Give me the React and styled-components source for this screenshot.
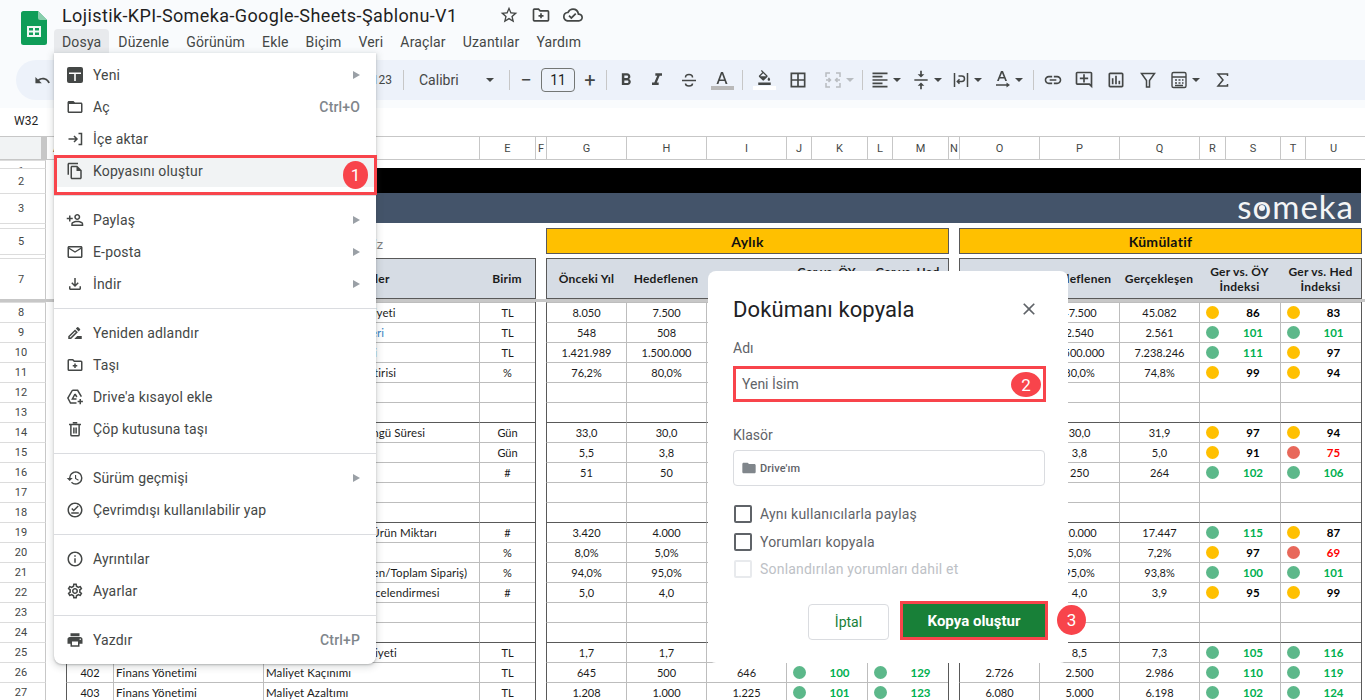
import React from "react";
import styled, { createGlobalStyle, css } from "styled-components";
import {
  MdUndo, MdFormatBold, MdFormatItalic, MdFormatColorFill, MdBorderAll, MdFormatAlignLeft,
  MdVerticalAlignCenter, MdLink, MdOutlineAddComment, MdOutlineInsertChart, MdStarBorder,
  MdOutlineCloudDone, MdFolderOpen, MdOutlineFileCopy, MdOutlinePersonAddAlt,
  MdOutlineEmail, MdOutlineFileDownload, MdOutlineDriveFileRenameOutline,
  MdHistory, MdOutlineOfflinePin, MdOutlineInfo, MdOutlineSettings, MdPrint,
  MdClose, MdFolder,
} from "react-icons/md";

const GlobalStyle = createGlobalStyle`
  html, body { margin: 0; padding: 0; overflow: hidden; background: #fff; }
  * { box-sizing: border-box; }
`;

const UI_FONT = `Roboto, "Liberation Sans", sans-serif`;
const CELL_FONT = `Lato, "Liberation Sans", sans-serif`;
const LINE = "#bdbdbd";
const DARK = "#595959";
const RED = "#f8444b";
const COLS = "46px 20px 47px 150px 216px 56px 11px 80px 80px 80px 25px 56px 25px 56px 11px 80px 80px 80px 26px 55px 25px 56px 1fr";

const Page = styled.div`
  position: relative;
  width: 1365px;
  height: 700px;
  overflow: hidden;
  background: #fff;
  font-family: ${UI_FONT};
`;

/* top chrome */
const Chrome = styled.header`
  display: flex;
  height: 60px;
  background: #f9fbfd;
`;
const LogoSlot = styled.div`
  width: 62px;
  padding: 11px 0 0 21px;
`;
const TitleArea = styled.div`
  display: flex;
  flex-direction: column;
`;
const TitleRow = styled.div`
  display: flex;
  align-items: center;
  height: 29px;
  padding-top: 1px;
`;
const DocTitle = styled.div`
  width: 431px;
  font-size: 18px;
  letter-spacing: 0.39px;
  color: #1f1f1f;
`;
const TitleIcon = styled.span`
  display: flex;
  justify-content: center;
  width: 32px;
  font-size: 20px;
  color: #444746;
`;
const MenuBar = styled.nav`
  display: flex;
  margin-left: -8px;
  gap: 1px;
`;
const MenuLabel = styled.div`
  height: 24px;
  line-height: 26px;
  padding: 0 8px;
  font-size: 14px;
  letter-spacing: 0.16px;
  color: #444746;
  background: ${(p) => (p.$open ? "#e8eaed" : "transparent")};
  border-radius: 4px 4px 0 0;
`;

const ToolStrip = styled.div`
  background: #f9fbfd;
  height: 48px;
  padding: 0 0 8px 16px;
`;
const Toolbar = styled.div`
  display: flex;
  align-items: center;
  height: 40px;
  padding-left: 14px;
  background: #edf2fa;
  border-radius: 20px 0 0 20px;
  color: #444746;
`;
const ToolSlot = styled.div`
  display: flex;
  flex: none;
  align-items: center;
  justify-content: ${(p) => (p.$pad !== undefined ? "flex-start" : "center")};
  gap: 3px;
  width: ${(p) => p.$w}px;
  padding-left: ${(p) => p.$pad || 0}px;
  height: 24px;
  font-size: ${(p) => p.$size || 20}px;
  color: ${(p) => (p.$off ? "#b8bcc0" : "#444746")};
`;
const Sep = styled.i`
  display: block;
  width: 1px;
  height: 20px;
  background: #c7c7c7;
`;
const Caret = styled.i`
  display: block;
  flex: none;
  width: 0;
  height: 0;
  border-left: 4px solid transparent;
  border-right: 4px solid transparent;
  border-top: 4px solid ${(p) => (p.$off ? "#b8bcc0" : "#444746")};
`;
const NumberFormats = styled.div`
  display: flex;
  flex: none;
  justify-content: flex-end;
  align-items: center;
  width: 338px;
  font-size: 12px;
  color: #444746;
`;
const FontPicker = styled.div`
  display: flex;
  flex: none;
  align-items: center;
  justify-content: space-between;
  width: 88px;
  padding: 0 8px 0 5px;
  font-size: 14px;
`;
const SizeBox = styled.div`
  width: 34px;
  height: 24px;
  line-height: 22px;
  text-align: center;
  font-size: 14px;
  color: #1f1f1f;
  border: 1px solid #747775;
  border-radius: 4px;
`;
const ColorStack = styled.div`
  display: flex;
  flex-direction: column;
  align-items: center;
  gap: 1px;
  font-size: 15px;
  line-height: 0;
`;
const ColorBar = styled.i`
  display: block;
  width: 23px;
  height: 4px;
  background: ${(p) => p.$color};
`;

const FormulaBar = styled.div`
  height: 28px;
  line-height: 26px;
  padding-left: 14px;
  font-size: 12px;
  color: #1f1f1f;
  background: #fff;
`;

/* sheet */
const SheetRow = styled.div`
  display: grid;
  grid-template-columns: ${COLS};
  grid-template-rows: ${(p) => p.$h}px;
  height: ${(p) => p.$h}px;
  overflow: hidden;
  font-family: ${CELL_FONT};
  font-size: 11px;
  color: #1b1b1b;
`;
const ColLetters = styled(SheetRow)`
  grid-template-rows: 22px;
  font-family: ${UI_FONT};
  color: #444746;
  border-top: 1px solid #c7c7c7;
  border-bottom: 1px solid #c7c7c7;
`;
const Corner = styled.div`
  background: linear-gradient(90deg, #f1f3f4 41px, #c7c7c7 41px);
`;
const Letter = styled.div`
  display: flex;
  align-items: center;
  justify-content: center;
  border-left: 1px solid #c7c7c7;
`;
const RowNum = styled.div`
  display: flex;
  justify-content: center;
  align-items: ${(p) => (p.$top ? "flex-start" : "center")};
  padding: ${(p) => p.$top || 0}px 3px 0 0;
  font-family: ${UI_FONT};
  color: #444746;
  border-top: 1px solid #dcdcdc;
  border-right: 1px solid #c7c7c7;
`;
const Blank = styled.div``;
const Band = styled.div`
  grid-column: 3 / span 20;
  display: flex;
  align-items: center;
  justify-content: flex-end;
  background: ${(p) => p.$color};
`;
const Brand = styled.div`
  padding: 0 7px 4px 0;
  font-family: Lato, sans-serif;
  font-size: 33px;
  line-height: 30px;
  letter-spacing: 1px;
  color: #f4f5f6;
`;
const BrandO = styled.span`
  position: relative;
  &::after {
    content: "";
    position: absolute;
    left: 50%;
    top: 55%;
    width: 6px;
    height: 6px;
    margin: -3px 0 0 -3.5px;
    border-radius: 50%;
    background: #f4f5f6;
  }
`;
const SectionNote = styled.div`
  grid-column: 5 / span 2;
  display: flex;
  align-items: center;
  padding: 4px 0 0 11px;
  font-size: 14px;
  color: #7f7f7f;
`;
const SectionTitle = styled.div`
  grid-column: ${(p) => p.$col} / span 7;
  display: flex;
  align-items: center;
  justify-content: center;
  margin-right: -1px;
  background: #ffc000;
  border: 1px solid ${DARK};
  font-size: 14px;
  letter-spacing: 0.3px;
  font-weight: 700;
  color: #111;
`;
const HeadCell = styled.div`
  grid-column: span ${(p) => p.$span || 1};
  display: flex;
  align-items: center;
  justify-content: center;
  text-align: center;
  line-height: 15px;
  font-size: 12px;
  letter-spacing: 0.25px;
  font-weight: 700;
  color: #1b1b1b;
  background: #d6dce4;
  border-top: 1px solid ${DARK};
  border-bottom: 1px solid ${DARK};
  ${(p) => p.$edge && css`border-left: 1px solid ${DARK};`}
`;
const FreezeBar = styled.div`
  height: 3px;
  background: #c7c7c7;
`;
const Gap = styled.div`
  border-left: 1px solid ${DARK};
`;
const Cell = styled.div`
  display: flex;
  align-items: center;
  justify-content: ${(p) => (p.$left ? "flex-start" : "center")};
  white-space: nowrap;
  overflow: hidden;
  color: ${(p) => p.$color || "inherit"};
  border-top: 1px solid ${(p) => (p.$strong ? DARK : LINE)};
  border-left: 1px solid ${(p) => (p.$edge ? DARK : LINE)};
  ${(p) => p.$left && css`
    padding-left: 2px;
    font-size: 11.5px;
    letter-spacing: 0.1px;
  `}
`;
const ScoreCell = styled(Cell)`
  grid-column: span 2;
  display: grid;
  grid-template-columns: ${(p) => (p.$wide ? "26px 55px" : "25px 56px")};
  justify-items: center;
  font-size: 11.5px;
  font-weight: 700;
`;
const Dot = styled.i`
  display: block;
  width: 13px;
  height: 13px;
  border-radius: 50%;
  background: ${(p) => p.$color};
`;

/* file menu */
const FileMenu = styled.div`
  position: absolute;
  left: 54px;
  top: 53px;
  width: 322px;
  padding: 6px 0 8px;
  background: #fff;
  border-radius: 0 0 8px 8px;
  box-shadow: 0 2px 6px 2px rgba(60, 64, 67, 0.15), 0 1px 2px rgba(60, 64, 67, 0.3);
`;
const MenuItem = styled.div`
  position: relative;
  display: flex;
  align-items: center;
  height: 32px;
  padding-left: 12px;
  font-size: 14px;
  letter-spacing: 0.15px;
  color: #444746;
  background: ${(p) => (p.$hot ? "#f1f3f4" : "transparent")};
`;
const ItemIcon = styled.span`
  display: flex;
  justify-content: center;
  width: 18px;
  margin-right: 9px;
  font-size: 18px;
  color: #444746;
`;
const Shortcut = styled.span`
  margin-left: auto;
  padding-right: 16px;
  font-size: 14px;
  font-weight: 500;
  color: #80868b;
`;
const SubArrow = styled.i`
  margin-left: auto;
  margin-right: 16px;
  width: 0;
  height: 0;
  border-top: 4px solid transparent;
  border-bottom: 4px solid transparent;
  border-left: 7px solid #9aa0a6;
`;
const MenuRule = styled.div`
  height: 1px;
  margin: 8px 0;
  background: #dadce0;
`;
const ItemFrame = styled.div`
  position: absolute;
  left: 0;
  right: -1px;
  top: 0;
  bottom: -8px;
  border: 3px solid ${RED};
`;
const Badge = styled.div`
  position: absolute;
  display: flex;
  align-items: center;
  justify-content: center;
  font-family: ${UI_FONT};
  font-size: 17px;
  color: #fff;
  background: ${RED};
  border-radius: 50%;
  left: ${(p) => p.$x}px;
  top: ${(p) => p.$y}px;
  width: ${(p) => p.$w}px;
  height: ${(p) => p.$h}px;
`;

/* copy dialog */
const Dialog = styled.div`
  position: absolute;
  left: 708px;
  top: 271px;
  width: 360px;
  height: 392px;
  padding: 23px 22px 0 25px;
  background: #fff;
  border-radius: 8px;
`;
const DialogHead = styled.div`
  display: flex;
  align-items: center;
  justify-content: space-between;
  height: 30px;
  padding-right: 7px;
`;
const DialogTitle = styled.div`
  font-size: 22px;
  letter-spacing: 0.1px;
  color: #202124;
`;
const CloseIcon = styled.span`
  display: flex;
  font-size: 20px;
  color: #5f6368;
`;
const FieldLabel = styled.div`
  margin-top: ${(p) => p.$mt}px;
  height: 20px;
  line-height: 20px;
  font-size: 14px;
  color: #5f6368;
`;
const NameInput = styled.div`
  position: relative;
  display: flex;
  align-items: center;
  height: 36px;
  margin-top: 8px;
  padding-left: 6px;
  font-size: 14px;
  color: #5f6368;
  border: 3px solid ${RED};
`;
const FolderField = styled.div`
  display: flex;
  align-items: center;
  gap: 3px;
  width: 312px;
  height: 36px;
  margin-top: 5px;
  padding-left: 7px;
  font-size: 11px;
  font-weight: 500;
  letter-spacing: 0.1px;
  color: #5f6368;
  border: 1px solid #dadce0;
  border-radius: 4px;
`;
const FolderGlyph = styled.span`
  display: flex;
  font-size: 16px;
  color: #80868b;
`;
const CheckRow = styled.div`
  display: flex;
  align-items: center;
  gap: 8px;
  height: 18px;
  margin: ${(p) => p.$mt}px 0 0 1px;
  font-size: 14px;
  letter-spacing: 0.2px;
  color: ${(p) => (p.$off ? "#bdc1c6" : "#5f6368")};
`;
const CheckBox = styled.i`
  display: block;
  width: 18px;
  height: 18px;
  border: 2px solid ${(p) => (p.$off ? "#e8eaed" : "#5f6368")};
  border-radius: 2px;
`;
const DialogFoot = styled.div`
  display: flex;
  justify-content: flex-end;
  align-items: flex-end;
  gap: 11px;
  margin-top: 23px;
  margin-right: -2px;
`;
const GhostButton = styled.div`
  display: flex;
  align-items: center;
  justify-content: center;
  width: 81px;
  height: 36px;
  font-size: 14px;
  color: #188038;
  border: 1px solid #dadce0;
  border-radius: 4px;
`;
const CopyFrame = styled.div`
  width: 148px;
  height: 39px;
  border: 3px solid ${RED};
`;
const CopyButton = styled.div`
  display: flex;
  align-items: center;
  justify-content: center;
  height: 100%;
  font-size: 15px;
  font-weight: 700;
  color: #fff;
  background: #188038;
`;

const TONE = { g: "#5cb88a", a: "#ffc000", r: "#e8685a" };
const scoreColor = (tone) => (tone === "g" ? "#00b050" : tone === "r" ? "#ff0000" : "#000");

const Score = ({ tone, value, strong, wide }) => (
  <ScoreCell $strong={strong} $wide={wide}>
    {tone && <Dot $color={TONE[tone]} />}
    {tone && <span style={{ color: scoreColor(tone) }}>{value}</span>}
  </ScoreCell>
);

const rows = [
  { n: 8, b: "101", c: "Finans Yönetimi", d: "Toplam Lojistiğin Maliyeti", e: "TL", m: ["8.050", "7.500", "6.450"], s: ["a", 86, "a", 83], k: ["47.500", "45.082"], o: "52.420", t: ["a", 86, "a", 83] },
  { n: 9, b: "102", c: "Finans Yönetimi", d: "Birim Başı Yakım Gideri", dc: "#3d85c6", e: "TL", m: ["548", "508", "512"], s: ["g", 101, "g", 101], k: ["2.540", "2.561"], o: "2.540", t: ["g", 101, "g", 101] },
  { n: 10, b: "103", c: "Finans Yönetimi", d: "Yeni Depolama Gideri", e: "TL", m: ["1.421.989", "1.500.000", "1.458.000"], s: ["g", 103, "a", 97], k: ["7.500.000", "7.238.246"], o: "6.520.000", t: ["g", 111, "a", 97] },
  { n: 11, b: "104", c: "Finans Yönetimi", d: "Lojistik Maliyetler Getirisi", e: "%", m: ["76,2%", "80,0%", "75,4%"], s: ["a", 99, "a", 94], k: ["80,0%", "74,8%"], o: "75,5%", t: ["a", 99, "a", 94] },
  { n: 12 }, { n: 13 },
  { n: 14, strong: true, b: "201", c: "Sipariş Yönetimi", d: "Siparişin Teslimat Döngü Süresi", e: "Gün", m: ["33,0", "30,0", "32,0"], s: ["a", 97, "a", 94], k: ["30,0", "31,9"], o: "33,0", t: ["a", 97, "a", 94] },
  { n: 15, b: "202", c: "Sipariş Yönetimi", d: "Teslimat Süresi", e: "Gün", m: ["5,5", "3,8", "5,0"], s: ["a", 91, "r", 75], k: ["3,8", "5,0"], o: "5,5", t: ["a", 91, "r", 75] },
  { n: 16, b: "203", c: "Sipariş Yönetimi", d: "Sipariş Sayısı", e: "#", m: ["51", "50", "52"], s: ["g", 102, "g", 106], k: ["250", "264"], o: "259", t: ["g", 102, "g", 106] },
  { n: 17 }, { n: 18 },
  { n: 19, strong: true, b: "301", c: "Depo Yönetimi", d: "Depoda Sevk Edilen Ürün Miktarı", e: "#", m: ["3.420", "4.000", "3.930"], s: ["g", 115, "a", 87], k: ["20.000", "17.447"], o: "15.170", t: ["g", 115, "a", 87] },
  { n: 20, b: "302", c: "Depo Yönetimi", d: "Hasarlı Ürün Oranı", e: "%", m: ["8,0%", "5,0%", "7,8%"], s: ["a", 97, "r", 69], k: ["5,0%", "7,2%"], o: "7,0%", t: ["a", 97, "r", 69] },
  { n: 21, b: "303", c: "Depo Yönetimi", d: "Doluluğu (Teslim Edilen/Toplam Sipariş)", e: "%", m: ["94,0%", "95,0%", "94,0%"], s: ["g", 100, "g", 101], k: ["95,0%", "93,8%"], o: "94,0%", t: ["g", 100, "g", 101] },
  { n: 22, b: "304", c: "Depo Yönetimi", d: "Ortalama Kargo Derecelendirmesi", e: "#", m: ["5,0", "4,0", "4,7"], s: ["a", 95, "a", 99], k: ["4,0", "3,9"], o: "4,1", t: ["a", 95, "a", 99] },
  { n: 23 }, { n: 24 },
  { n: 25, strong: true, b: "401", c: "Finans Yönetimi", d: "Kilometre Başına Maliyeti", e: "TL", m: ["1,7", "1,7", "1,8"], s: ["g", 105, "g", 116], k: ["8,5", "7,3"], o: "7,0", t: ["g", 105, "g", 116] },
  { n: 26, b: "402", c: "Finans Yönetimi", d: "Maliyet Kaçınımı", e: "TL", m: ["645", "500", "646"], s: ["g", 100, "g", 129], k: ["2.500", "2.986"], o: "2.726", t: ["g", 110, "g", 119] },
  { n: 27, b: "403", c: "Finans Yönetimi", d: "Maliyet Azaltımı", e: "TL", m: ["1.208", "1.000", "1.225"], s: ["g", 101, "g", 123], k: ["5.000", "6.198"], o: "6.080", t: ["g", 102, "g", 124] },
];

const DataRow = ({ r }) => {
  const st = r.strong;
  const qm = r.m || ["", "", ""];
  const qs = r.s || [];
  const qt = r.t || [];
  const qk = r.k || ["", ""];
  return (
    <SheetRow $h={20}>
      <RowNum>{r.n}</RowNum>
      <Blank />
      <Cell $edge $strong={st}>{r.b}</Cell>
      <Cell $left $strong={st}>{r.c}</Cell>
      <Cell $left $strong={st} $color={r.dc}>{r.d}</Cell>
      <Cell $strong={st}>{r.e}</Cell>
      <Gap />
      <Cell $edge $strong={st}>{qm[0]}</Cell>
      <Cell $strong={st}>{qm[1]}</Cell>
      <Cell $strong={st}>{qm[2]}</Cell>
      <Score tone={qs[0]} value={qs[1]} strong={st} />
      <Score tone={qs[2]} value={qs[3]} strong={st} />
      <Gap />
      <Cell $edge $strong={st}>{r.o}</Cell>
      <Cell $strong={st}>{qk[0]}</Cell>
      <Cell $strong={st}>{qk[1]}</Cell>
      <Score tone={qt[0]} value={qt[1]} strong={st} wide />
      <Score tone={qt[2]} value={qt[3]} strong={st} />
      <Gap />
    </SheetRow>
  );
};

const SheetsLogo = () => (
  <svg width="26" height="34" viewBox="0 0 26 34">
    <path d="M2.5 0H17l9 9v22.5a2.5 2.5 0 0 1-2.5 2.5h-21A2.5 2.5 0 0 1 0 31.500v-29A2.500 2.500 0 0 1 2.500 0z" fill="#0f9d58" />
    <path d="M17 0l9 9h-7a2 2 0 0 1-2-2z" fill="#87ceac" />
    <path d="M6 15h14v11H6zm2 2v2.500h4V17zm6 0v2.500h4V17zm-6 4.500V24h4v-2.500zm6 0V24h4v-2.500z" fill="#f1f8f4" fillRule="evenodd" />
  </svg>
);

const StrikeIcon = () => (
  <svg width="18" height="18" viewBox="0 0 18 18" fill="none" stroke="currentColor" strokeWidth="1.500">
    <path d="M2 9.500h14" />
    <path d="M12.500 6.500C12.500 4.800 11 3.500 9 3.500S5.500 4.800 5.500 6.500M5.500 12.500c0 1.500 1.500 2.500 3.500 2.500s3.500-1 3.500-2.500" />
  </svg>
);
const LetterA = () => (
  <svg width="14" height="14" viewBox="0 0 14 14" fill="currentColor">
    <path d="M6 1h2l4.500 12h-1.900l-1-2.900H4.400l-1 2.900H1.500zm-1 7.500h4L7 3z" />
  </svg>
);
const MergeIcon = () => (
  <svg width="20" height="20" viewBox="0 0 20 20" fill="none" stroke="currentColor" strokeWidth="1.500">
    <path d="M3 7V3h4M13 3h4v4M3 13v4h4M13 17h4v-4" />
    <path d="M3 10h4M5.500 8 7.500 10l-2 2M17 10h-4M14.500 8l-2 2 2 2" />
  </svg>
);
const WrapIcon = () => (
  <svg width="20" height="20" viewBox="0 0 20 20" fill="none" stroke="currentColor" strokeWidth="1.500">
    <path d="M3.500 3v14M16.500 3v14" />
    <path d="M7.500 4h3.300a2.700 2.700 0 0 1 0 5.400H6.500M8.500 7.200 6.300 9.400l2.200 2.200" transform="translate(0 2)" />
  </svg>
);
const RotateIcon = () => (
  <svg width="20" height="20" viewBox="0 0 20 20" fill="currentColor">
    <path d="M9 1h2l4 10h-1.800l-.9-2.400H7.700L6.800 11H5zm-.7 6h3.400L10 3z" />
    <path d="M4 14.300h10.500v-1.800L18 15l-3.500 2.500v-1.800H4z" />
  </svg>
);
const FunnelIcon = () => (
  <svg width="20" height="20" viewBox="0 0 20 20" fill="none" stroke="currentColor" strokeWidth="1.500">
    <path d="M3.500 3.500h13L11.500 10.500V17h-3v-6.500z" />
  </svg>
);
const CalcIcon = () => (
  <svg width="20" height="20" viewBox="0 0 20 20" fill="none" stroke="currentColor" strokeWidth="1.400">
    <rect x="3" y="2.500" width="14" height="15" rx="1.500" />
    <path d="M3 7h14M6 10h2M9.500 10h2M13 10h1.500M6 13h2M9.500 13h2M13 13h1.500M6 15.500h8" />
  </svg>
);
const SigmaIcon = () => (
  <svg width="18" height="18" viewBox="0 0 18 18" fill="none" stroke="currentColor" strokeWidth="1.500">
    <path d="M13.500 5V3h-9.500L9 9l-5 6h9.500v-2" />
  </svg>
);
const NewSheetIcon = () => (
  <svg width="18" height="18" viewBox="0 0 18 18">
    <rect x="1" y="1" width="16" height="16" rx="2" fill="#444746" />
    <path d="M3 6.500h12v1.500H9.800v7H8.200V8H3z" fill="#fff" />
  </svg>
);
const ImportIcon = () => (
  <svg width="18" height="18" viewBox="0 0 18 18" fill="none" stroke="#444746" strokeWidth="1.500">
    <path d="M2.500 9h8M8 6l3 3-3 3M12.500 3.500h3v11h-3" />
  </svg>
);
const FolderPlusIcon = ({ size = 18 }) => (
  <svg width={size} height={size} viewBox="0 0 24 24" fill="none" stroke="currentColor" strokeWidth="2">
    <path d="M3 6a1 1 0 0 1 1-1h5l2 2h9a1 1 0 0 1 1 1v10a1 1 0 0 1-1 1H4a1 1 0 0 1-1-1z" />
    <path d="M12 10v6M9 13h6" />
  </svg>
);
const DriveShortcutIcon = () => (
  <svg width="18" height="18" viewBox="0 0 24 24" fill="none" stroke="#444746" strokeWidth="2">
    <path d="M8.500 3h7l5 8.500M8.500 3 2.500 13.500 6 20h8" />
    <path d="M12 8l-3.500 6.500h5.500M12 8l2.500 4" />
    <path d="M19 14.500v7M15.500 18h7" />
  </svg>
);
const TrashIcon = () => (
  <svg width="18" height="18" viewBox="0 0 24 24" fill="none" stroke="#444746" strokeWidth="2">
    <path d="M6.500 7v12.500a1.500 1.500 0 0 0 1.500 1.500h8a1.500 1.500 0 0 0 1.500-1.500V7M4 6h16M9 3.500h6M10.500 10v8M13.500 10v8" />
  </svg>
);

const Item = ({ icon, label, shortcut, sub, hot, children }) => (
  <MenuItem $hot={hot}>
    <ItemIcon>{icon}</ItemIcon>
    {label}
    {shortcut && <Shortcut>{shortcut}</Shortcut>}
    {sub && <SubArrow />}
    {children}
  </MenuItem>
);

const menuLabels = ["Düzenle", "Görünüm", "Ekle", "Biçim", "Veri", "Araçlar", "Uzantılar", "Yardım"];
const letters = "A B C D E F G H I J K L M N O P Q R S T U".split(" ");

export default function App() {
  return (
    <Page>
      <GlobalStyle />
      <Chrome>
        <LogoSlot><SheetsLogo /></LogoSlot>
        <TitleArea>
          <TitleRow>
            <DocTitle>Lojistik-KPI-Someka-Google-Sheets-Şablonu-V1</DocTitle>
            <TitleIcon><MdStarBorder /></TitleIcon>
            <TitleIcon><FolderPlusIcon size={20} /></TitleIcon>
            <TitleIcon><MdOutlineCloudDone /></TitleIcon>
          </TitleRow>
          <MenuBar>
            <MenuLabel $open>Dosya</MenuLabel>
            {menuLabels.map((m) => <MenuLabel key={m}>{m}</MenuLabel>)}
          </MenuBar>
        </TitleArea>
      </Chrome>

      <ToolStrip>
        <Toolbar>
          <ToolSlot $w={24} $size={17}><MdUndo /></ToolSlot>
          <NumberFormats>123</NumberFormats>
          <ToolSlot $w={22}><Sep /></ToolSlot>
          <FontPicker>Calibri<Caret /></FontPicker>
          <ToolSlot $w={15}><Sep /></ToolSlot>
          <ToolSlot $w={18}>−</ToolSlot>
          <ToolSlot $w={46}><SizeBox>11</SizeBox></ToolSlot>
          <ToolSlot $w={18}>+</ToolSlot>
          <ToolSlot $w={14}><Sep /></ToolSlot>
          <ToolSlot $w={26}><MdFormatBold /></ToolSlot>
          <ToolSlot $w={36}><MdFormatItalic /></ToolSlot>
          <ToolSlot $w={28}><StrikeIcon /></ToolSlot>
          <ToolSlot $w={38}><ColorStack><LetterA /><ColorBar $color="#b9b9b9" /></ColorStack></ToolSlot>
          <ToolSlot $w={2}><Sep /></ToolSlot>
          <ToolSlot $w={42}><ColorStack><MdFormatColorFill /><ColorBar $color="#fff" /></ColorStack></ToolSlot>
          <ToolSlot $w={25}><MdBorderAll /></ToolSlot>
          <ToolSlot $w={46} $pad={13} $off><MergeIcon /><Caret $off /></ToolSlot>
          <ToolSlot $w={12}><Sep /></ToolSlot>
          <ToolSlot $w={35} $pad={2}><MdFormatAlignLeft /><Caret /></ToolSlot>
          <ToolSlot $w={41} $pad={8}><MdVerticalAlignCenter /><Caret /></ToolSlot>
          <ToolSlot $w={41} $pad={7}><WrapIcon /><Caret /></ToolSlot>
          <ToolSlot $w={41} $pad={7}><RotateIcon /><Caret /></ToolSlot>
          <ToolSlot $w={14}><Sep /></ToolSlot>
          <ToolSlot $w={26}><MdLink /></ToolSlot>
          <ToolSlot $w={36}><MdOutlineAddComment /></ToolSlot>
          <ToolSlot $w={28}><MdOutlineInsertChart /></ToolSlot>
          <ToolSlot $w={36}><FunnelIcon /></ToolSlot>
          <ToolSlot $w={38} $pad={3}><CalcIcon /><Caret /></ToolSlot>
          <ToolSlot $w={38}><SigmaIcon /></ToolSlot>
        </Toolbar>
      </ToolStrip>

      <FormulaBar>W32</FormulaBar>

      <ColLetters $h={24}>
        <Corner />
        {letters.map((l) => <Letter key={l}>{l}</Letter>)}
      </ColLetters>

      <SheetRow $h={8}><RowNum $top={4}>1</RowNum></SheetRow>
      <SheetRow $h={25}><RowNum>2</RowNum><Blank /><Band $color="#000" /></SheetRow>
      <SheetRow $h={30}>
        <RowNum>3</RowNum><Blank />
        <Band $color="#44546a"><Brand>s<BrandO>o</BrandO>meka</Brand></Band>
      </SheetRow>
      <SheetRow $h={5}><RowNum /></SheetRow>
      <SheetRow $h={26}>
        <RowNum>5</RowNum><Blank />
        <SectionNote>Detaylı KPI Analiz</SectionNote>
        <SectionTitle $col={8}>Aylık</SectionTitle>
        <SectionTitle $col={16}>Kümülatif</SectionTitle>
      </SheetRow>
      <SheetRow $h={4}><RowNum /></SheetRow>
      <SheetRow $h={41}>
        <RowNum>7</RowNum><Blank />
        <HeadCell $edge>Kod</HeadCell>
        <HeadCell>Kategori</HeadCell>
        <HeadCell>KPI'ler</HeadCell>
        <HeadCell>Birim</HeadCell>
        <Gap />
        <HeadCell $edge>Önceki Yıl</HeadCell>
        <HeadCell>Hedeflenen</HeadCell>
        <HeadCell>Gerçekleşen</HeadCell>
        <HeadCell $span={2}>Ger vs. ÖY<br />İndeksi</HeadCell>
        <HeadCell $span={2}>Ger vs. Hed<br />İndeksi</HeadCell>
        <Gap />
        <HeadCell $edge>Önceki Yıl</HeadCell>
        <HeadCell>Hedeflenen</HeadCell>
        <HeadCell>Gerçekleşen</HeadCell>
        <HeadCell $span={2}>Ger vs. ÖY<br />İndeksi</HeadCell>
        <HeadCell $span={2}>Ger vs. Hed<br />İndeksi</HeadCell>
        <Gap />
      </SheetRow>
      <FreezeBar />
      {rows.map((r) => <DataRow key={r.n} r={r} />)}

      <FileMenu>
        <Item icon={<NewSheetIcon />} label="Yeni" sub />
        <Item icon={<MdFolderOpen />} label="Aç" shortcut="Ctrl+O" />
        <Item icon={<ImportIcon />} label="İçe aktar" />
        <Item icon={<MdOutlineFileCopy />} label="Kopyasını oluştur" hot>
          <ItemFrame />
          <Badge $x={289} $y={6} $w={25} $h={28}>1</Badge>
        </Item>
        <MenuRule />
        <Item icon={<MdOutlinePersonAddAlt style={{ transform: "scaleX(-1)" }} />} label="Paylaş" sub />
        <Item icon={<MdOutlineEmail />} label="E-posta" sub />
        <Item icon={<MdOutlineFileDownload />} label="İndir" sub />
        <MenuRule />
        <Item icon={<MdOutlineDriveFileRenameOutline />} label="Yeniden adlandır" />
        <Item icon={<FolderPlusIcon />} label="Taşı" />
        <Item icon={<DriveShortcutIcon />} label="Drive'a kısayol ekle" />
        <Item icon={<TrashIcon />} label="Çöp kutusuna taşı" />
        <MenuRule />
        <Item icon={<MdHistory />} label="Sürüm geçmişi" sub />
        <Item icon={<MdOutlineOfflinePin />} label="Çevrimdışı kullanılabilir yap" />
        <MenuRule />
        <Item icon={<MdOutlineInfo />} label="Ayrıntılar" />
        <Item icon={<MdOutlineSettings />} label="Ayarlar" />
        <MenuRule />
        <Item icon={<MdPrint />} label="Yazdır" shortcut="Ctrl+P" />
      </FileMenu>

      <Dialog>
        <DialogHead>
          <DialogTitle>Dokümanı kopyala</DialogTitle>
          <CloseIcon><MdClose /></CloseIcon>
        </DialogHead>
        <FieldLabel $mt={14}>Adı</FieldLabel>
        <NameInput>
          Yeni İsim
          <Badge $x={275} $y={3} $w={30} $h={25}>2</Badge>
        </NameInput>
        <FieldLabel $mt={23}>Klasör</FieldLabel>
        <FolderField><FolderGlyph><MdFolder /></FolderGlyph>Drive'ım</FolderField>
        <CheckRow $mt={19}><CheckBox />Aynı kullanıcılarla paylaş</CheckRow>
        <CheckRow $mt={10}><CheckBox />Yorumları kopyala</CheckRow>
        <CheckRow $mt={9} $off><CheckBox $off />Sonlandırılan yorumları dahil et</CheckRow>
        <DialogFoot>
          <GhostButton>İptal</GhostButton>
          <CopyFrame><CopyButton>Kopya oluştur</CopyButton></CopyFrame>
          <Badge $x={349} $y={334} $w={29} $h={30}>3</Badge>
        </DialogFoot>
      </Dialog>
    </Page>
  );
}
